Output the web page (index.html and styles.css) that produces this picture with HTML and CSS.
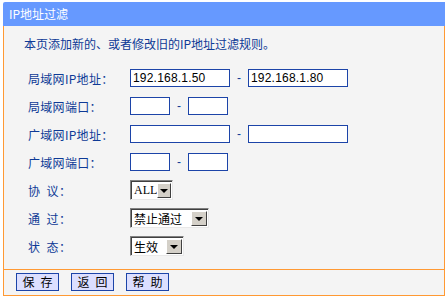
FILE: index.html
```html
<!DOCTYPE html>
<html lang="zh-CN">
<head>
    <meta charset="UTF-8">
    <title>IP地址过滤</title>
    <link rel="stylesheet" href="styles.css">
</head>
<body>
    <div class="panel">
        <div class="panel-head">IP地址过滤</div>
        <div class="panel-body">
            <p class="intro">本页添加新的、或者修改旧的IP地址过滤规则。</p>

            <div class="row">
                <span class="label">局域网IP地址：</span>
                <input class="ip" type="text" value="192.168.1.50">
                <span class="dash">-</span>
                <input class="ip" type="text" value="192.168.1.80">
            </div>
            <div class="row">
                <span class="label">局域网端口：</span>
                <input class="port" type="text">
                <span class="dash">-</span>
                <input class="port" type="text">
            </div>
            <div class="row">
                <span class="label">广域网IP地址：</span>
                <input class="ip" type="text">
                <span class="dash">-</span>
                <input class="ip" type="text">
            </div>
            <div class="row">
                <span class="label">广域网端口：</span>
                <input class="port" type="text">
                <span class="dash">-</span>
                <input class="port" type="text">
            </div>
            <div class="row">
                <span class="label">协&ensp;议：</span>
                <div class="select sel-proto">
                    <span class="select-text latin">ALL</span>
                    <span class="select-btn"><span class="arrow"></span></span>
                </div>
            </div>
            <div class="row">
                <span class="label">通&ensp;过：</span>
                <div class="select sel-pass">
                    <span class="select-text">禁止通过</span>
                    <span class="select-btn"><span class="arrow"></span></span>
                </div>
            </div>
            <div class="row">
                <span class="label">状&ensp;态：</span>
                <div class="select sel-state">
                    <span class="select-text">生效</span>
                    <span class="select-btn"><span class="arrow"></span></span>
                </div>
            </div>
        </div>
        <div class="panel-foot">
            <button class="btn">保&ensp;存</button>
            <button class="btn">返&ensp;回</button>
            <button class="btn">帮&ensp;助</button>
        </div>
    </div>
</body>
</html>
```

FILE: styles.css
```css
body {
    margin: 0;
    padding: 0;
    background: #fff;
    font-family: "Noto Sans CJK SC", "Liberation Sans", sans-serif;
    font-size: 12px;
}

.panel {
    margin: 2px 3px 0 3px;
    width: 442px;
}

.panel-head {
    height: 24px;
    line-height: 24px;
    background: #6699ff;
    color: #fff;
    padding-left: 6px;
    font-size: 12px;
    border-top-left-radius: 2px;
}

.panel-body {
    background: #f4f4f4;
    border-left: 1px solid #ff9933;
    border-right: 1px solid #ff9933;
    border-bottom: 1px solid #ff9933;
    height: 244px;
    box-sizing: border-box;
    padding: 12px 0 0 20px;
}

.intro {
    margin: 0 0 14px 0;
    line-height: 12px;
    color: #0e3a96;
}

.row {
    display: flex;
    align-items: center;
    height: 28px;
    padding-left: 4px;
}

.label {
    width: 102px;
    color: #0e3a96;
    flex-shrink: 0;
    letter-spacing: 0.3px;
}

input {
    box-sizing: border-box;
    height: 18px;
    border: 1px solid #1c44a8;
    background: #fff;
    padding: 0 2px;
    margin: 0;
    font-family: "Liberation Sans", sans-serif;
    font-size: 12px;
    letter-spacing: 0.2px;
    color: #000;
    outline: none;
}

.ip {
    width: 100px;
}

.port {
    width: 40px;
}

.dash {
    width: 18px;
    text-align: center;
    color: #0e3a96;
    font-family: "Liberation Sans", sans-serif;
}

.select {
    display: flex;
    align-items: stretch;
    box-sizing: border-box;
    height: 20px;
    background: #fff;
    border-top: 1px solid #808080;
    border-left: 1px solid #808080;
    border-right: 1px solid #e8e8e8;
    border-bottom: 1px solid #e8e8e8;
    box-shadow: inset 1px 1px 0 #404040;
    padding: 1px 1px 0 1px;
}

.sel-proto {
    width: 43px;
}

.sel-pass {
    width: 79px;
}

.sel-state {
    width: 54px;
}

.select-text {
    flex: 1;
    line-height: 17px;
    padding-left: 2px;
    color: #000;
}

.latin {
    font-family: "Liberation Serif", serif;
    font-size: 12px;
}

.select-btn {
    width: 14px;
    margin: 1px 0 1px 0;
    background: #d4d0c8;
    border-top: 1px solid #fff;
    border-left: 1px solid #fff;
    border-right: 1px solid #404040;
    border-bottom: 1px solid #404040;
    display: flex;
    align-items: center;
    justify-content: center;
}

.arrow {
    width: 0;
    height: 0;
    border-left: 4px solid transparent;
    border-right: 4px solid transparent;
    border-top: 4px solid #000;
}

.panel-foot {
    background: #f4f4f4;
    border-left: 1px solid #ff9933;
    border-right: 1px solid #ff9933;
    border-bottom: 1px solid #ff9933;
    height: 26px;
    box-sizing: border-box;
    padding: 3px 0 0 12px;
    display: flex;
    gap: 12px;
    align-items: flex-start;
}

.btn {
    width: 43px;
    height: 18px;
    padding: 0;
    margin: 0;
    background: #dcdfff;
    border: 1px solid #1c44a8;
    font-family: "Noto Sans CJK SC", sans-serif;
    font-size: 12px;
    line-height: 14px;
    color: #000;
}
```
